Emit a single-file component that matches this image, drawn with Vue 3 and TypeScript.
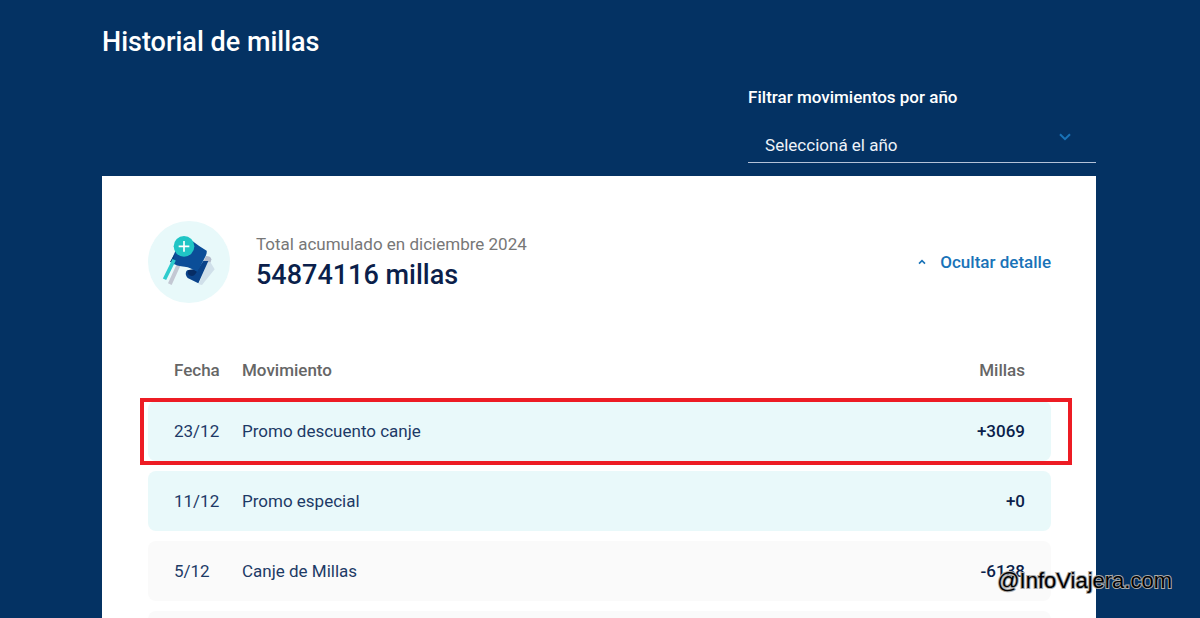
<script setup lang="ts">
import { ref } from 'vue'

interface Movement {
  date: string
  label: string
  miles: string
  kind: 'credit' | 'debit'
  highlighted?: boolean
}

const year = ref('')
const open = ref(true)

const movements: Movement[] = [
  { date: '23/12', label: 'Promo descuento canje', miles: '+3069', kind: 'credit', highlighted: true },
  { date: '11/12', label: 'Promo especial', miles: '+0', kind: 'credit' },
  { date: '5/12', label: 'Canje de Millas', miles: '-6138', kind: 'debit' },
  { date: '', label: '', miles: '', kind: 'debit' },
]
</script>

<template>
  <main class="page">
    <h1 class="title">Historial de millas</h1>

    <div class="filter">
      <label class="filter-label" for="year">Filtrar movimientos por año</label>
      <div class="select-box">
        <select id="year" v-model="year" class="select">
          <option value="">Seleccioná el año</option>
        </select>
        <svg class="select-arrow" viewBox="0 0 12 8" aria-hidden="true">
          <path d="M1 1.2 6 6.2 11 1.2" />
        </svg>
      </div>
    </div>

    <section class="card">
      <header class="summary">
        <svg class="badge" viewBox="24 27 246 246" aria-hidden="true">
          <circle cx="147" cy="150" r="123" fill="#e8f9fa" />
          <path d="M176 217 186 219 224 172 206 142Z" fill="#d0e0ea" />
          <path d="M190 149 198 132Q212 132 214 142L212 151Z" fill="#b4bccb" />
          <path d="M117 156 92 211" stroke="#c3c8d3" stroke-width="12" stroke-linecap="square" />
          <path d="M146 174 174 170 190 147H205L175 214 143 198Q134 188 139 178Q141 174 146 174Z" fill="#0a438a" />
          <path d="M146 174 176 172 166 186Q160 196 148 190Q140 184 146 174Z" fill="#062c64" />
          <path d="M106 118 158 88Q178 104 200 116Q202 124 192 142L172 180Q152 166 134 164Q112 164 91 150Z" fill="#0b4e98" />
          <path d="M104 126 99 150 90 150Z" fill="#083a78" />
          <path d="M100 148 76 197" stroke="#2dcccd" stroke-width="11" stroke-linecap="square" />
          <circle cx="132" cy="103" r="31" fill="#20c5c5" />
          <path d="M132 87V119M116 103H148" stroke="#fff" stroke-width="5" />
        </svg>
        <div class="total">
          <p class="total-label">Total acumulado en diciembre 2024</p>
          <p class="total-value">54874116 millas</p>
        </div>
        <button class="toggle" type="button" :aria-expanded="open" @click="open = !open">
          <svg class="toggle-arrow" viewBox="0 0 8 6" aria-hidden="true">
            <path d="M1 4.6 4 1.6 7 4.6" />
          </svg>
          Ocultar detalle
        </button>
      </header>

      <table v-if="open" class="table">
        <thead>
          <tr>
            <th class="date" scope="col">Fecha</th>
            <th scope="col">Movimiento</th>
            <th class="miles" scope="col">Millas</th>
          </tr>
        </thead>
        <tbody>
          <tr v-for="(m, i) in movements" :key="i" :class="[m.kind, { highlighted: m.highlighted }]">
            <td class="date">{{ m.date }}</td>
            <td>{{ m.label }}</td>
            <td class="miles">{{ m.miles }}</td>
          </tr>
        </tbody>
      </table>
    </section>

    <div class="watermark">@InfoViajera.com</div>
  </main>
</template>

<style>
body {
  margin: 0;
  background: #043263;
}
</style>

<style scoped>
.page {
  position: relative;
  box-sizing: border-box;
  height: 100vh;
  overflow: hidden;
  padding: 25px 104px 0 102px;
  background: #043263;
  font-family: Roboto, "Liberation Sans", sans-serif;
  font-size: 17px;
  line-height: 24px;
  color: #1d3a66;
}

.title {
  margin: 0;
  font-size: 27px;
  line-height: 34px;
  font-weight: 500;
  color: #fff;
}

.filter {
  width: 35%;
  margin: 26px 0 13px auto;
  color: #fff;
}

.filter-label {
  display: block;
  font-weight: 500;
}

.select-box {
  position: relative;
  margin-top: 18px;
}

.select {
  display: block;
  box-sizing: border-box;
  width: 100%;
  height: 36px;
  padding: 0 48px 0 17px;
  border: 0;
  border-bottom: 1px solid #b4c2d8;
  border-radius: 0;
  appearance: none;
  background: transparent;
  font: inherit;
  color: #eef3f9;
}

.select-arrow {
  position: absolute;
  top: 6px;
  right: 25px;
  width: 12px;
  height: 8px;
  fill: none;
  stroke: #1973b8;
  stroke-width: 2;
  pointer-events: none;
}

.card {
  padding: 45px 45px 0 46px;
  background: #fff;
}

.summary {
  display: flex;
  align-items: center;
}

.badge {
  width: 82px;
  height: 82px;
  margin-right: 26px;
}

.total {
  flex: 1;
}

.total p {
  margin: 0;
}

.total-label {
  color: #777;
}

.total .total-value {
  padding-top: 2px;
  font-size: 27px;
  line-height: 34px;
  font-weight: 500;
  color: #0b1f4b;
}

.toggle {
  display: flex;
  align-items: center;
  gap: 14px;
  padding: 0;
  border: 0;
  background: none;
  font: inherit;
  font-weight: 500;
  color: #1973b8;
}

.toggle-arrow {
  width: 8px;
  height: 6px;
  fill: none;
  stroke: #1973b8;
  stroke-width: 1.6;
}

.table {
  width: 100%;
  margin-top: 45px;
  border-collapse: separate;
  border-spacing: 0 10px;
  table-layout: fixed;
}

.table th {
  height: 24px;
  padding: 0 0 9px;
  text-align: left;
  font-weight: 500;
  color: #666;
}

.table td {
  height: 60px;
  padding: 0;
}

.table .date {
  width: 68px;
  padding-left: 26px;
}

.table .miles {
  width: 120px;
  padding-right: 26px;
  text-align: right;
}

.table td.miles {
  font-weight: 500;
  color: #0b1f4b;
}

.credit td {
  background: #e9f9fa;
}

.debit td {
  background: #fafafa;
}

.table td:first-child {
  border-radius: 8px 0 0 8px;
}

.table td:last-child {
  border-radius: 0 8px 8px 0;
}

.highlighted {
  position: relative;
}

.highlighted td:first-child::after {
  content: "";
  position: absolute;
  inset: -3px -21px -4px -8px;
  border: 4px solid #ed1c24;
}

.watermark {
  position: absolute;
  right: 28px;
  bottom: 24px;
  font-family: "Liberation Sans", Arial, sans-serif;
  font-size: 22px;
  line-height: 26px;
  color: #000;
  -webkit-text-stroke: 2px #aaa;
  paint-order: stroke fill;
}
</style>
